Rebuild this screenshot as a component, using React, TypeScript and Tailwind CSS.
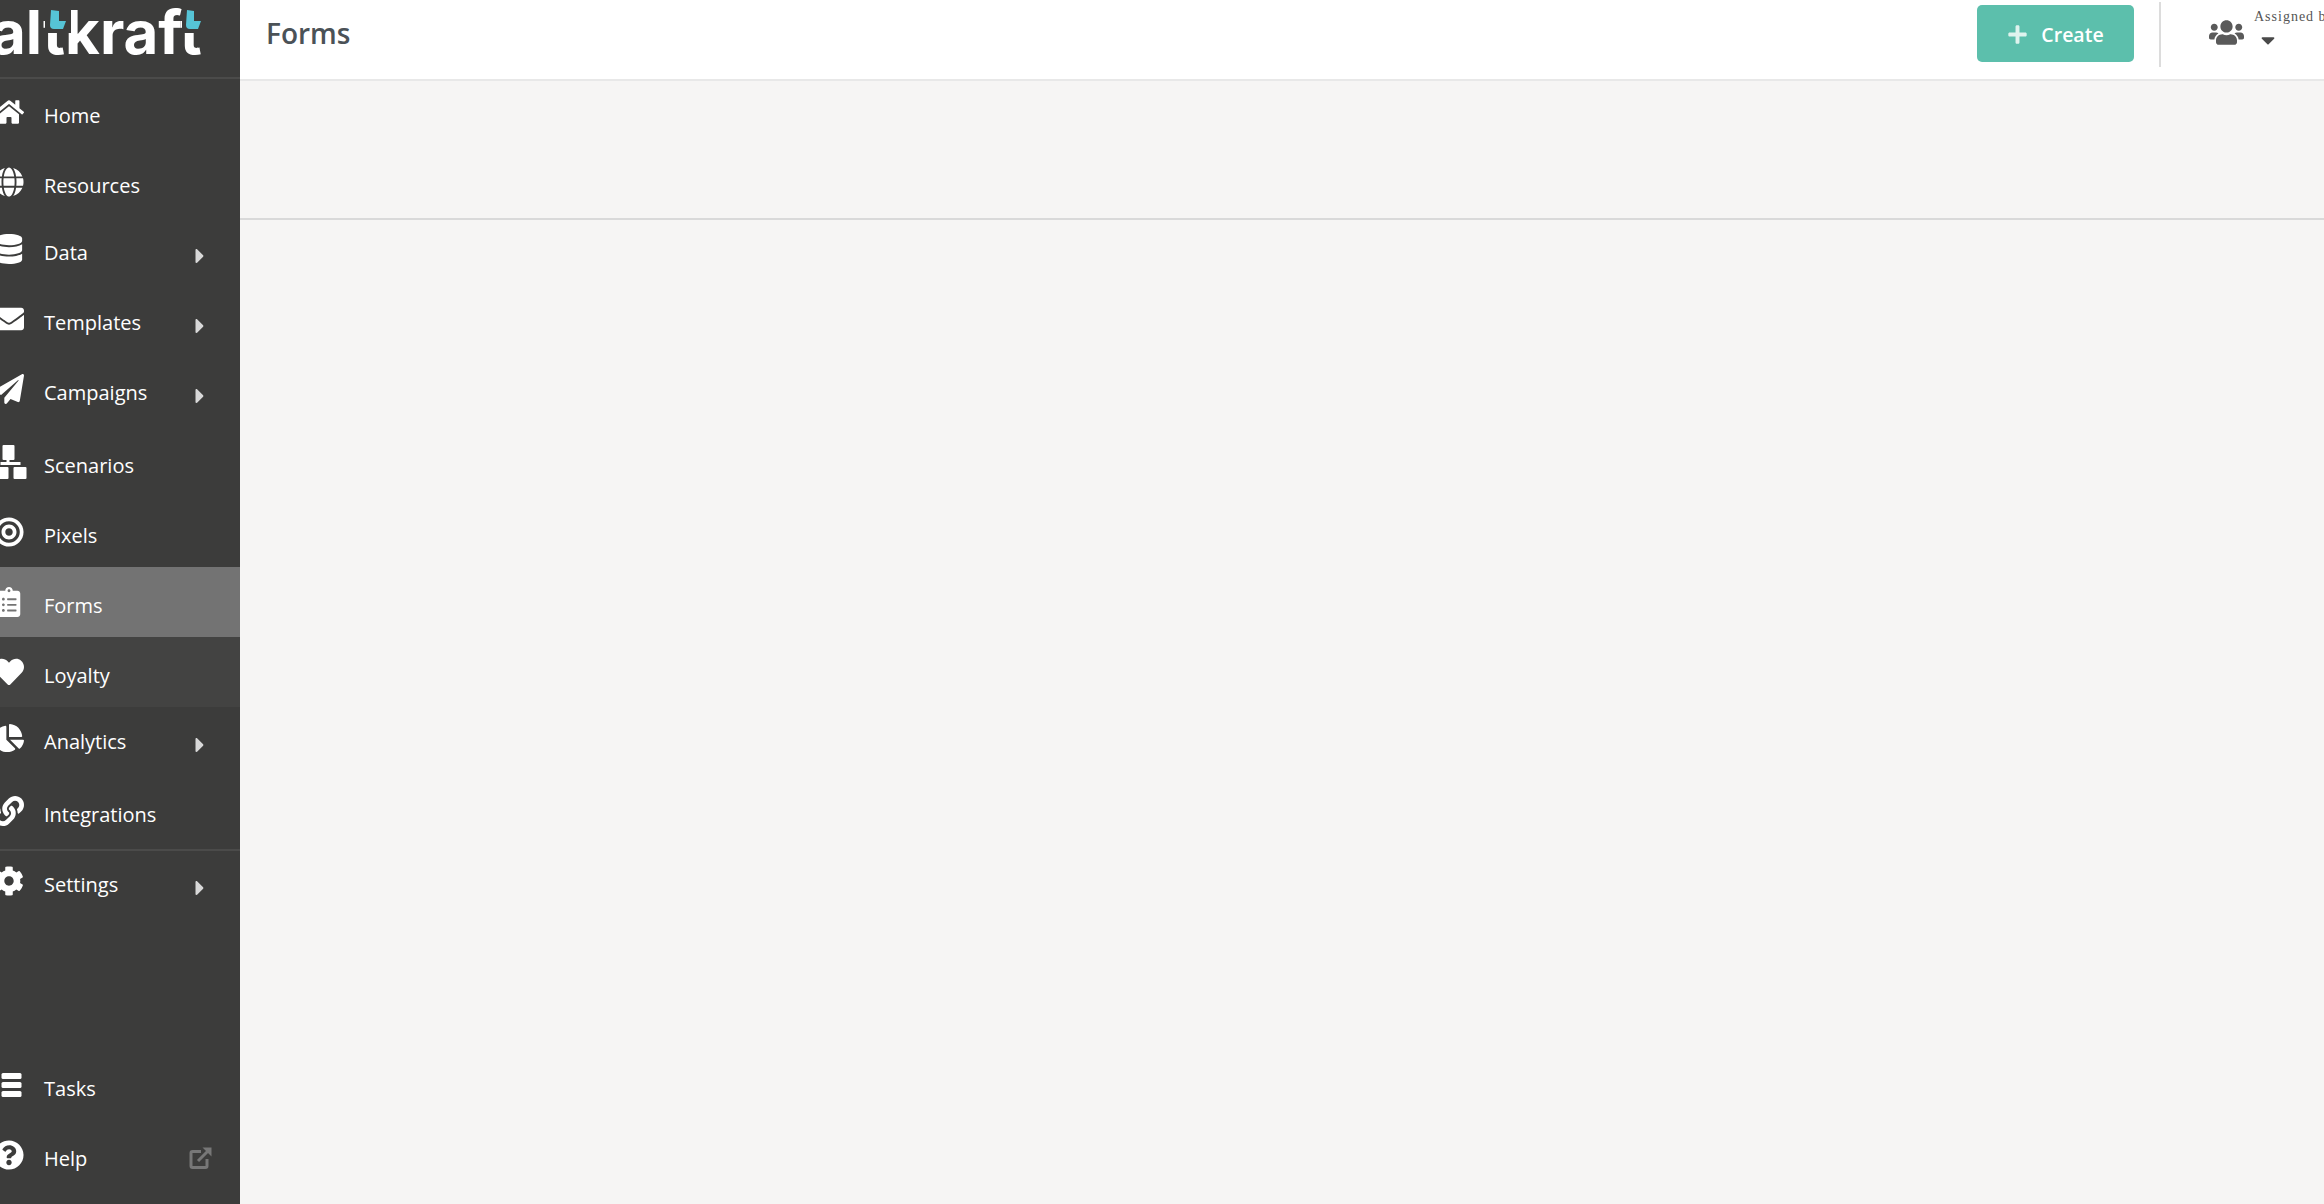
import React from "react";
import { FaHome, FaGlobe, FaDatabase, FaEnvelope, FaPaperPlane, FaBullseye, FaClipboardList, FaHeart, FaChartPie, FaLink, FaCog, FaQuestionCircle, FaCaretRight, FaCaretDown, FaUsers, FaPlus } from "react-icons/fa";

const font = { fontFamily: '"Open Sans", "Noto Sans", sans-serif' };

function SitemapIcon() {
  return (
    <svg width="40" height="34" viewBox="-11.500 0 40 34" fill="currentColor">
      <rect x="2" y="0" width="12" height="15" rx="1" />
      <rect x="6" y="15" width="3" height="5" />
      <rect x="0" y="17" width="20" height="3" />
      <rect x="-5" y="22" width="13" height="12" rx="1" />
      <rect x="13" y="22" width="13" height="12" rx="1" />
    </svg>
  );
}

function BarsIcon() {
  return (
    <svg width="40" height="26" viewBox="-11.500 0 40 26" fill="currentColor">
      <rect x="1" y="1" width="20" height="6" rx="1.500" />
      <rect x="1" y="10" width="20" height="6" rx="1.500" />
      <rect x="1" y="19" width="20" height="6" rx="1.500" />
    </svg>
  );
}

function Row({ icon, label, arrow, box, ext }: { icon: React.ReactNode; label: string; arrow?: boolean; box: string; ext?: boolean }) {
  return (
    <div className={`flex items-start shrink-0 ${box}`}>
      <div className="flex items-center h-7 w-full relative">
        <div className="w-[45px] -ml-[14px] mr-[13px] flex justify-center text-white text-[30px] -translate-y-1 shrink-0">{icon}</div>
        <span className="text-white text-[20px] font-medium leading-7 whitespace-nowrap">{label}</span>
        {arrow && <FaCaretRight className="absolute left-[188px] top-[5px] text-[#d8d8d8] text-[24px]" />}
        {ext && (
          <svg className="absolute left-[189px] top-[1px]" width="24" height="24" viewBox="0 0 24 24" fill="none" stroke="#777" strokeWidth="3">
            <path d="M12 5.500H3.500a1.500 1.500 0 0 0-1.500 1.500v13a1.500 1.500 0 0 0 1.500 1.500h13a1.500 1.500 0 0 0 1.500-1.500v-7" />
            <path d="M9 15 L20 4" />
            <path d="M13.500 1.500 H22.500 V10.500 Z" fill="#777" stroke="none" />
          </svg>
        )}
      </div>
    </div>
  );
}

export default function App() {
  return (
    <div className="flex w-[2324px] h-[1204px] overflow-hidden bg-[#f6f5f4]" style={font}>
      <aside className="w-[240px] shrink-0 bg-[#3c3c3b] flex flex-col h-full overflow-hidden">
        <div className="h-[77px] shrink-0 relative overflow-hidden">
          <span className="absolute left-[-9px] top-[-6px] text-white text-[60px] leading-[76px] font-bold whitespace-nowrap" style={{ fontFamily: '"Inter", sans-serif' }}>altkraft</span>
          <svg className="absolute left-0 top-0" width="240" height="77" viewBox="0 0 240 77">
            <path d="M45 4H71V33H45Z" fill="#3c3c3b" />
            <path d="M51 10L59 11V21H66L63 29H54Q50 29 50 25Z" fill="#56c4d6" />
            <path d="M182 4H206V33H182Z" fill="#3c3c3b" />
            <path d="M187 10L194 11V21H201L198 29H190Q186 29 186 25Z" fill="#56c4d6" />
          </svg>
        </div>
        <div className="h-[2px] bg-[#4b4b4a] shrink-0" />
        <Row icon={<FaHome />} label="Home" box="h-[67px] pt-[23px]" />
        <Row icon={<FaGlobe />} label="Resources" box="h-[68px] pt-[26px]" />
        <Row icon={<FaDatabase />} label="Data" arrow box="h-[70px] pt-[25px]" />
        <Row icon={<FaEnvelope />} label="Templates" arrow box="h-[70px] pt-[25px]" />
        <Row icon={<FaPaperPlane />} label="Campaigns" arrow box="h-[73px] pt-[25px]" />
        <Row icon={<SitemapIcon />} label="Scenarios" box="h-[70px] pt-[25px]" />
        <Row icon={<FaBullseye />} label="Pixels" box="h-[70px] pt-[25px]" />
        <Row icon={<FaClipboardList />} label="Forms" box="h-[70px] pt-[25px] bg-[#737373]" />
        <Row icon={<FaHeart />} label="Loyalty" box="h-[70px] pt-[25px] bg-[#434342]" />
        <Row icon={<FaChartPie />} label="Analytics" arrow box="h-[69px] pt-[21px]" />
        <Row icon={<FaLink />} label="Integrations" box="h-[73px] pt-[25px]" />
        <div className="h-[2px] bg-[#4b4b4a] shrink-0" />
        <Row icon={<FaCog />} label="Settings" arrow box="h-[70px] pt-[20px]" />
        <div className="mt-auto pb-[11px] flex flex-col">
          <Row icon={<BarsIcon />} label="Tasks" box="h-[70px] pt-[22px]" />
          <Row icon={<FaQuestionCircle />} label="Help" ext box="h-[70px] pt-[22px]" />
        </div>
      </aside>
      <main className="flex-1 min-w-0 flex flex-col">
        <header className="h-[81px] shrink-0 bg-white border-b-2 border-[#e8e8e8] flex items-start overflow-hidden">
          <h1 className="ml-[26px] mt-[14px] text-[28px] leading-[38px] font-semibold text-[#4b5257]">Forms</h1>
          <button className="ml-auto mt-[5px] w-[157px] h-[57px] rounded-[5px] bg-[#5cbfac] flex items-center justify-center gap-[13px] text-white text-[19.500px] font-semibold">
            <FaPlus className="text-[21px] text-[#dff3ee] translate-y-px" />
            <span className="translate-y-px">Create</span>
          </button>
          <div className="ml-[25px] mt-[2px] w-[2px] h-[65px] bg-[#dcdcdc]" />
          <div className="w-[163px] flex items-start shrink-0">
            <FaUsers className="ml-[48px] mt-[15px] text-[35px] text-[#5a5a5a] shrink-0" />
            <div className="ml-[10px] flex flex-col items-start">
              <span className="mt-[9px] text-[14px] leading-[16px] tracking-[1px] text-[#555] whitespace-nowrap" style={{ fontFamily: '"Liberation Serif", serif' }}>Assigned by</span>
              <FaCaretDown className="ml-[3px] mt-[4px] text-[22px] text-[#4a4a4a]" />
            </div>
          </div>
        </header>
        <div className="h-[139px] shrink-0 border-b-2 border-[#d9d9d9]" />
      </main>
    </div>
  );
}
